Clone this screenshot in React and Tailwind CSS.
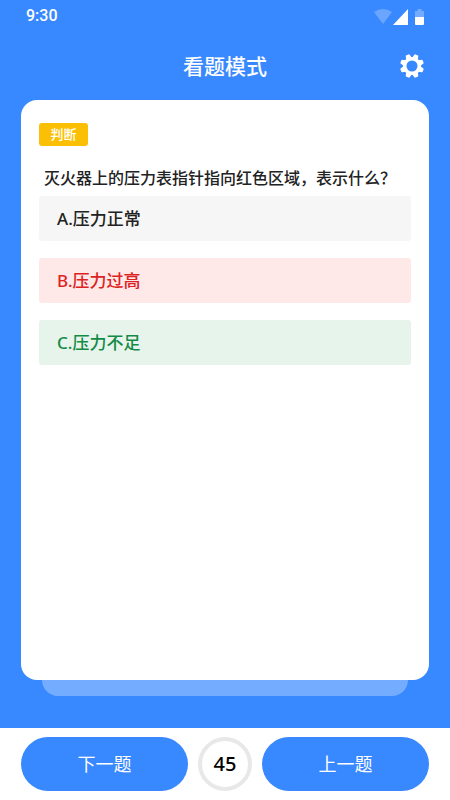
import React, { useState } from "react";

const question = {
  type: "判断",
  title: "灭火器上的压力表指针指向红色区域，表示什么？",
  options: [
    { id: "A", text: "压力正常", style: "bg-[#f6f6f6] text-[#222222]" },
    { id: "B", text: "压力过高", style: "bg-[#ffe8e8] text-[#dd2222]" },
    { id: "C", text: "压力不足", style: "bg-[#e7f4eb] text-[#148a47]" },
  ],
};

const GearIcon = () => (
  <svg viewBox="-12 -12 24 24" className="size-6" fill="none" aria-hidden="true">
    <circle r="7.3" stroke="white" strokeWidth="3.6" />
    {[22.5, 67.5, 112.5, 157.5, 202.5, 247.5, 292.5, 337.5].map((angle) => (
      <path
        key={angle}
        d="M-3 -8 L-2 -11.5 Q-1.800 -12 -1.200 -12 H1.200 Q1.800 -12 2 -11.500 L3 -8 Z"
        fill="white"
        transform={`rotate(${angle})`}
      />
    ))}
  </svg>
);

const StatusBar = () => (
  <div className="flex h-8 items-center justify-between pr-6 pl-[26px] font-[Roboto,sans-serif] text-base font-medium text-white">
    <span>9:30</span>
    <svg viewBox="0 0 52 17" className="h-[17px] w-[52px]" fill="white" aria-hidden="true">
      <path d="M0 4 Q9 -2 18 4 L9 16 Z" opacity="0.25" />
      <path d="M19 17 L34 1 V17 Z" />
      <path d="M41 3 H43.500 V1 H47.500 V3 H50 V9 H41 Z" opacity="0.3" />
      <path d="M41 9 H50 V16 Q50 17 49 17 H42 Q41 17 41 16 Z" />
    </svg>
  </div>
);

const App = () => {
  const [current, setCurrent] = useState(45);

  return (
    <div className="flex min-h-screen flex-col bg-[#3888ff] font-['Noto_Sans','Noto_Sans_CJK_SC',sans-serif]">
      <StatusBar />

      <header className="grid h-[68px] grid-cols-[1fr_auto_1fr] items-center px-[26px]">
        <h1 className="col-start-2 text-[21px] leading-7 font-medium text-white">看题模式</h1>
        <button type="button" aria-label="设置" className="justify-self-end">
          <GearIcon />
        </button>
      </header>

      <main className="flex flex-1 flex-col px-[21px] pb-8">
        <section className="flex-1 rounded-2xl bg-white px-[18px] pt-[23px]">
          <span className="flex h-[23px] w-[49px] items-center justify-center rounded-[3px] bg-[#fbbf06] text-[13px] font-medium text-white">
            {question.type}
          </span>
          <h2 className="mt-5 pl-[5px] text-base leading-6 font-medium text-[#222222]">
            {question.title}
          </h2>
          <div className="mt-[6px] flex flex-col gap-[17px]">
            {question.options.map((option) => (
              <button
                key={option.id}
                type="button"
                className={`h-[45px] rounded-[3px] pl-[18px] text-left text-[17px] font-medium ${option.style}`}
              >
                {option.id}.{option.text}
              </button>
            ))}
          </div>
        </section>
        <div className="mx-[21px] h-4 rounded-b-2xl bg-[#74adff]" />
      </main>

      <footer className="flex items-center gap-[10px] bg-white px-[21px] py-[9px]">
        <button
          type="button"
          onClick={() => setCurrent(current + 1)}
          className="h-[54px] flex-1 rounded-full bg-[#3888ff] text-lg text-white"
        >
          下一题
        </button>
        <span className="flex size-[54px] items-center justify-center rounded-full border-4 border-[#e8e8e8] text-xl font-medium text-black">
          {current}
        </span>
        <button
          type="button"
          onClick={() => setCurrent(Math.max(current - 1, 1))}
          className="h-[54px] flex-1 rounded-full bg-[#3888ff] text-lg text-white"
        >
          上一题
        </button>
      </footer>
    </div>
  );
};

export default App;
